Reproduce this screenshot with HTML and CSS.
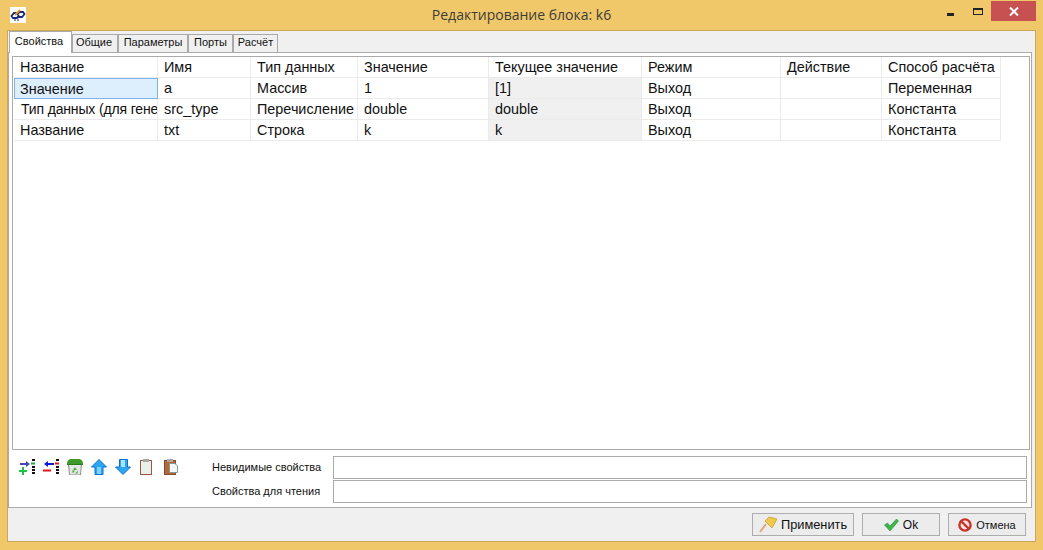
FILE: index.html
```html
<!DOCTYPE html>
<html lang="ru">
<head>
  <meta charset="UTF-8">
  <title>Редактирование блока: k6</title>
  <link rel="stylesheet" href="styles.css">
</head>
<body>
  <div class="window">
    <div class="titlebar">
      <div class="app-icon">
        <svg width="16" height="16" viewBox="0 0 16 16">
          <rect width="16" height="16" fill="#fff"/>
          <path d="M7 6 H4 L1.5 9 L3 11 H7 L9 8" fill="none" stroke="#1c2a78" stroke-width="1.8"/>
          <path d="M8 10 H12 L14.5 7 L13 5 H9.5 L7 8" fill="none" stroke="#1c2a78" stroke-width="1.8"/>
          <path d="M5 8 L10 3" fill="none" stroke="#e8951f" stroke-width="1.8"/>
          <path d="M4 13 H10" stroke="#1c2a78" stroke-width="1.2" stroke-dasharray="2 1"/>
        </svg>
      </div>
      <div class="title">Редактирование блока: k6</div>
      <div class="controls">
        <div class="ctl-min"></div>
        <div class="ctl-max"></div>
        <div class="ctl-close">
          <svg width="10" height="9" viewBox="0 0 10 9"><path d="M1 0.5 L9 8.5 M9 0.5 L1 8.5" stroke="#fff" stroke-width="2"/></svg>
        </div>
      </div>
    </div>

    <div class="client">
      <div class="tabs">
        <div class="tab active">Свойства</div>
        <div class="tab t-common">Общие</div>
        <div class="tab t-params">Параметры</div>
        <div class="tab t-ports">Порты</div>
        <div class="tab t-calc">Расчёт</div>
      </div>

      <div class="panel">
        <div class="grid-box">
          <table class="grid">
            <colgroup>
              <col class="c1"><col class="c2"><col class="c3"><col class="c4">
              <col class="c5"><col class="c6"><col class="c7"><col class="c8">
            </colgroup>
            <thead>
              <tr>
                <th>Название</th><th>Имя</th><th>Тип данных</th><th>Значение</th>
                <th>Текущее значение</th><th>Режим</th><th>Действие</th><th>Способ расчёта</th>
              </tr>
            </thead>
            <tbody>
              <tr>
                <td class="selected">Значение</td><td>a</td><td>Массив</td><td>1</td>
                <td class="readonly">[1]</td><td>Выход</td><td></td><td>Переменная</td>
              </tr>
              <tr>
                <td class="long">Тип данных (для гене</td><td>src_type</td><td>Перечисление</td><td>double</td>
                <td class="readonly">double</td><td>Выход</td><td></td><td>Константа</td>
              </tr>
              <tr>
                <td>Название</td><td>txt</td><td>Строка</td><td>k</td>
                <td class="readonly">k</td><td>Выход</td><td></td><td>Константа</td>
              </tr>
            </tbody>
          </table>
        </div>

        <div class="bottom">
          <div class="toolbar">
            <svg class="icon" width="16" height="16" viewBox="0 0 16 16">
              <path d="M1 4 H7 V2 L11 5 L7 8 V6 H1Z" fill="#4a45b5"/>
              <path d="M3 8 H5 V11 H8 V13 H5 V16 H3 V13 H0 V11 H3Z" fill="#1fc04a"/>
              <path d="M13 0h3v2h-3z M13 7h3v2h-3z M13 10h3v2h-3z M13 13h3v2h-3z" fill="#111"/>
              <rect x="12" y="3.5" width="4" height="2" fill="#1fa83f"/>
            </svg>
            <svg class="icon" width="16" height="16" viewBox="0 0 16 16">
              <path d="M11 4 H5 V2 L1 5 L5 8 V6 H11Z" fill="#1414d8"/>
              <rect x="0" y="10.500" width="8" height="2" fill="#ee1111"/>
              <path d="M13 0h3v2h-3z M13 7h3v2h-3z M13 10h3v2h-3z M13 13h3v2h-3z" fill="#111"/>
              <rect x="12" y="3.5" width="4" height="2" fill="#ee1111"/>
            </svg>
            <svg class="icon" width="16" height="16" viewBox="0 0 16 16">
              <path d="M1.500 5 H14.500 L13.500 16 H2.500Z" fill="#e4e8e4" stroke="#8a8f8a"/>
              <path d="M0 4 Q1 0 4 0 H12 Q15 0 16 4 V6 H0Z" fill="#3f9a2c"/>
              <rect x="0" y="5" width="16" height="1" fill="#2c7a1c"/>
              <path d="M8 8 L10 11 H6Z M5 11.500 H8 L6 14.500Z M11 11.500 L10.500 14.500 H8Z" fill="#5cab4a"/>
            </svg>
            <svg class="icon" width="16" height="16" viewBox="0 0 16 16">
              <path d="M8 .5 L15.5 8 H12 V15.500 H4 V8 H.5Z" fill="#2ea6ee" stroke="#0a6fd6"/>
              <path d="M6 8 H10 V15 H6Z" fill="#7cd0fa"/>
            </svg>
            <svg class="icon" width="16" height="16" viewBox="0 0 16 16">
              <path d="M8 15.500 L15.5 8 H12.500 V.5 H4.500 V8 H.5Z" fill="#2ea6ee" stroke="#0a6fd6"/>
              <path d="M6 1 H10 V8 H6Z" fill="#a8e2fc"/>
            </svg>
            <svg class="icon" width="16" height="16" viewBox="0 0 16 16">
              <rect x="1.500" y="1.500" width="11" height="14" fill="#e7f0ec" stroke="#9a5a3a"/>
              <rect x="4" y="0" width="6" height="3" fill="#a8a8a8"/>
            </svg>
            <svg class="icon" width="16" height="16" viewBox="0 0 16 16">
              <rect x="1.500" y="1.500" width="11" height="14" fill="#b4683a" stroke="#8a4a28"/>
              <rect x="4" y="0" width="6" height="3" fill="#a8a8a8"/>
              <path d="M6.500 4.500 H12 L14.500 7 V13.500 H6.500Z" fill="#f4f7f5" stroke="#7f9a9a"/>
            </svg>
          </div>
          <div class="fields">
            <div class="field">
              <span class="field-label">Невидимые свойства</span>
              <input class="field-input" type="text">
            </div>
            <div class="field">
              <span class="field-label">Свойства для чтения</span>
              <input class="field-input" type="text">
            </div>
          </div>
        </div>
      </div>

      <div class="footer">
        <button class="btn b-apply">
          <svg width="18" height="17" viewBox="0 0 18 17">
            <path d="M6 5 L10 1 L18 3 L13 12Z" fill="#f2c84a" stroke="#c9a030" stroke-width=".8"/>
            <path d="M1 16 L7 8" stroke="#dba878" stroke-width="2"/>
          </svg>
          Применить
        </button>
        <button class="btn b-ok">
          <svg width="15" height="14" viewBox="0 0 15 14">
            <path d="M.5 7 L3.500 5 L6 8 L12.500 1 L14.500 3 L6 13Z" fill="#3cb54a" stroke="#2a8f3a" stroke-width=".6"/>
          </svg>
          Ok
        </button>
        <button class="btn b-cancel">
          <svg width="14" height="14" viewBox="0 0 14 14">
            <circle cx="7" cy="7" r="5.600" fill="#f4e4e0" stroke="#c8322a" stroke-width="2.400"/>
            <path d="M3 3 L11 11" stroke="#c8322a" stroke-width="2.400"/>
          </svg>
          Отмена
        </button>
      </div>
    </div>
  </div>
</body>
</html>
```

FILE: styles.css
```css
html, body {
  margin: 0;
  padding: 0;
  overflow: hidden;
}
body {
  font-family: "Liberation Sans", Arial, sans-serif;
  font-size: 11px;
  color: #111;
}
.window {
  width: 1043px;
  height: 550px;
  box-sizing: border-box;
  background-color: #f0c869;
  padding: 0 7px 8px 7px;
  display: flex;
  flex-direction: column;
}

/* title bar */
.titlebar {
  height: 30px;
  flex: none;
  display: flex;
  position: relative;
}
.app-icon {
  margin: 7px 0 0 3px;
  height: 16px;
}
.title {
  position: absolute;
  left: 0;
  right: 0;
  top: 5px;
  text-align: center;
  font-family: "Open Sans", sans-serif;
  font-size: 14px;
  color: #3c3c3c;
}
.controls {
  margin-left: auto;
  display: flex;
  height: 20px;
  margin-top: 1px;
}
.ctl-min {
  width: 7px;
  height: 3px;
  background: #222;
  margin: 12px 19px 0 0;
}
.ctl-max {
  box-sizing: border-box;
  width: 10px;
  height: 7px;
  border: 1px solid #222;
  border-top-width: 2px;
  margin: 7px 8px 0 0;
}
.ctl-close {
  width: 45px;
  background: #c75050;
  display: flex;
  align-items: center;
  justify-content: center;
}

/* client */
.client {
  flex: 1;
  min-height: 0;
  background: #f0f0f0;
  border: 1px solid #c9a85a;
  display: flex;
  flex-direction: column;
  padding-right: 3px;
}
.tabs {
  height: 21px;
  flex: none;
  display: flex;
  align-items: flex-end;
  padding-left: 1px;
  position: relative;
  z-index: 1;
}
.tab {
  box-sizing: border-box;
  height: 18px;
  line-height: 15px;
  text-align: center;
  border: 1px solid #aaa;
  border-bottom: none;
  background: #f0f0f0;
}
.tab.active {
  width: 63px;
  line-height: 18px;
  padding-right: 3px;
  background: #fff;
  margin-bottom: -1px;
  height: 22px;
}
.t-common { width: 46px; padding-right: 2px; }
.t-params { width: 70px; }
.t-ports { width: 45px; }
.t-calc { width: 45px; }

.panel {
  flex: 1;
  min-height: 0;
  box-sizing: border-box;
  background: #fff;
  border: 1px solid #aaa;
  padding: 3px 1px 0 3px;
  display: flex;
  flex-direction: column;
}
.grid-box {
  height: 394px;
  flex: none;
  box-sizing: border-box;
  border: 1px solid #aaa;
  overflow: hidden;
  padding-left: 1px;
}
.grid {
  table-layout: fixed;
  border-collapse: separate;
  border-spacing: 0;
  width: 987px;
  font-size: 14.4px;
}
.c1 { width: 144px; }
.c2 { width: 93px; }
.c3 { width: 107px; }
.c4 { width: 131px; }
.c5 { width: 153px; }
.c6 { width: 139px; }
.c7 { width: 101px; }
.c8 { width: 119px; }
.grid th, .grid td {
  box-sizing: border-box;
  height: 21px;
  padding: 0 0 0 6px;
  border-right: 1px solid #ebebeb;
  border-bottom: 1px solid #ebebeb;
  font-weight: normal;
  text-align: left;
  white-space: nowrap;
  overflow: hidden;
}
.grid td.readonly { background: #f0f0f0; }
.grid td.selected {
  background: #ddeefc;
  border: 1px solid #7db3e6;
  padding-left: 5px;
}
.grid td.long {
  padding-left: 7px;
  font-size: 14px;
  letter-spacing: -0.15px;
}

.bottom {
  flex: 1;
  display: flex;
  padding-top: 6px;
}
.toolbar {
  width: 190px;
  flex: none;
  display: flex;
  align-items: flex-start;
  gap: 8px;
  padding: 3px 0 0 7px;
  box-sizing: border-box;
}
.icon { flex: none; }
.fields {
  flex: 1;
  display: flex;
  flex-direction: column;
  gap: 1px;
  padding-right: 3px;
}
.field {
  display: flex;
  align-items: center;
}
.field-label {
  width: 131px;
  flex: none;
  padding: 0 0 2px 10px;
  box-sizing: border-box;
  font-size: 11px;
}
.field-input {
  flex: 1;
  min-width: 0;
  box-sizing: border-box;
  height: 23px;
  background: #fff;
  border: 1px solid #aaa;
  padding: 0;
  margin: 0;
}

.footer {
  height: 33px;
  flex: none;
  display: flex;
  align-items: center;
  justify-content: flex-end;
  gap: 8px;
  padding-right: 6px;
}
.btn {
  box-sizing: border-box;
  height: 23px;
  padding: 0;
  border: 1px solid #adadad;
  background: #ececec;
  font-family: "Liberation Sans", Arial, sans-serif;
  font-size: 12.8px;
  color: #111;
  display: flex;
  align-items: center;
  justify-content: center;
  gap: 4px;
}
.b-apply { width: 102px; }
.b-ok { width: 78px; font-size: 12px; }
.b-cancel { width: 78px; font-size: 11px; }
```
